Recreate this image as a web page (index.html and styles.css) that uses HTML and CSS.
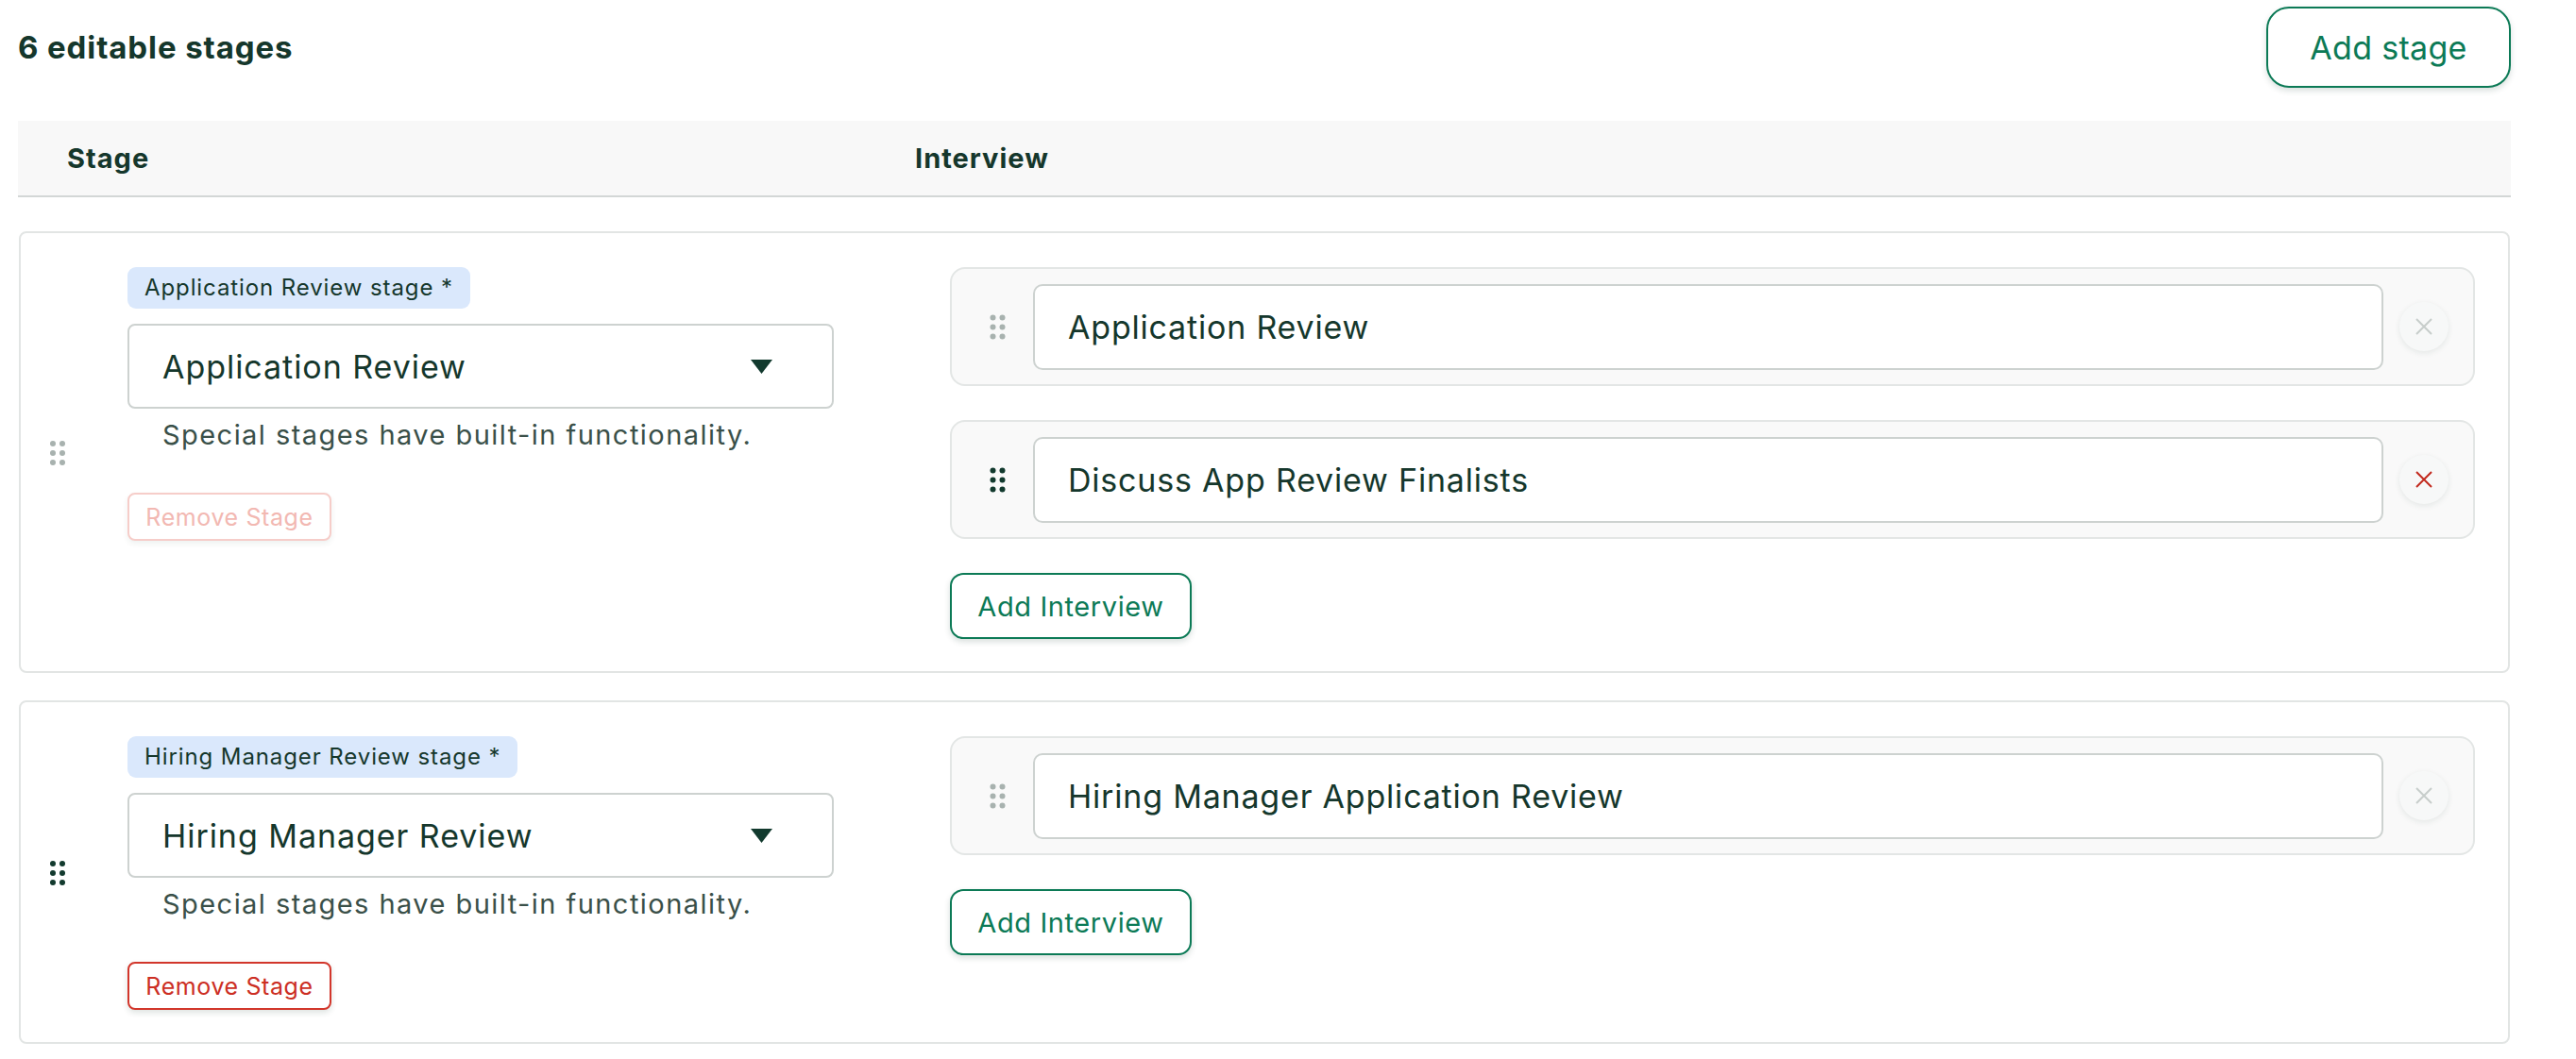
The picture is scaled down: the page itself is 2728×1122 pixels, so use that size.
FILE: index.html
```html
<!DOCTYPE html>
<html lang="en">
<head>
<meta charset="utf-8">
<title>Stages</title>
<link rel="stylesheet" href="styles.css">
</head>
<body>
<div class="page">
  <div class="topbar">
    <h2 class="title">6 editable stages</h2>
    <button class="btn-green btn-lg">Add stage</button>
  </div>

  <div class="table-head">
    <div class="th th-stage">Stage</div>
    <div class="th th-interview">Interview</div>
  </div>

  <div class="stage-list">
    <div class="stage-card">
      <div class="stage-handle">
        <svg class="dots dots-light" width="16" height="26" viewBox="0 0 16 26"><circle cx="3" cy="3" r="3"/><circle cx="13" cy="3" r="3"/><circle cx="3" cy="13" r="3"/><circle cx="13" cy="13" r="3"/><circle cx="3" cy="23" r="3"/><circle cx="13" cy="23" r="3"/></svg>
      </div>
      <div class="stage-col">
        <span class="badge">Application Review stage *</span>
        <div class="select">
          <span class="select-value">Application Review</span>
          <svg class="caret" width="23" height="15" viewBox="0 0 23 15"><polygon points="0,0 23,0 11.5,15"/></svg>
        </div>
        <p class="helper">Special stages have built-in functionality.</p>
        <button class="btn-remove is-disabled">Remove Stage</button>
      </div>
      <div class="interview-col">
        <div class="interview-row">
          <svg class="dots dots-light" width="17" height="27" viewBox="0 0 17 27"><circle cx="3.5" cy="3.5" r="3"/><circle cx="13.5" cy="3.5" r="3"/><circle cx="3.5" cy="13.5" r="3"/><circle cx="13.5" cy="13.5" r="3"/><circle cx="3.5" cy="23.5" r="3"/><circle cx="13.5" cy="23.5" r="3"/></svg>
          <div class="interview-input">Application Review</div>
          <span class="x-btn x-light"><svg width="18" height="18" viewBox="0 0 18 18"><path d="M1 1L17 17M17 1L1 17"/></svg></span>
        </div>
        <div class="interview-row">
          <svg class="dots dots-dark" width="17" height="27" viewBox="0 0 17 27"><circle cx="3.5" cy="3.5" r="3"/><circle cx="13.5" cy="3.5" r="3"/><circle cx="3.5" cy="13.5" r="3"/><circle cx="13.5" cy="13.5" r="3"/><circle cx="3.5" cy="23.5" r="3"/><circle cx="13.5" cy="23.5" r="3"/></svg>
          <div class="interview-input">Discuss App Review Finalists</div>
          <span class="x-btn x-red"><svg width="18" height="18" viewBox="0 0 18 18"><path d="M1 1L17 17M17 1L1 17"/></svg></span>
        </div>
        <button class="btn-green btn-sm">Add Interview</button>
      </div>
    </div>

    <div class="stage-card">
      <div class="stage-handle">
        <svg class="dots dots-dark" width="16" height="26" viewBox="0 0 16 26"><circle cx="3" cy="3" r="3"/><circle cx="13" cy="3" r="3"/><circle cx="3" cy="13" r="3"/><circle cx="13" cy="13" r="3"/><circle cx="3" cy="23" r="3"/><circle cx="13" cy="23" r="3"/></svg>
      </div>
      <div class="stage-col">
        <span class="badge">Hiring Manager Review stage *</span>
        <div class="select">
          <span class="select-value">Hiring Manager Review</span>
          <svg class="caret" width="23" height="15" viewBox="0 0 23 15"><polygon points="0,0 23,0 11.5,15"/></svg>
        </div>
        <p class="helper">Special stages have built-in functionality.</p>
        <button class="btn-remove">Remove Stage</button>
      </div>
      <div class="interview-col">
        <div class="interview-row">
          <svg class="dots dots-light" width="17" height="27" viewBox="0 0 17 27"><circle cx="3.5" cy="3.5" r="3"/><circle cx="13.5" cy="3.5" r="3"/><circle cx="3.5" cy="13.5" r="3"/><circle cx="13.5" cy="13.5" r="3"/><circle cx="3.5" cy="23.5" r="3"/><circle cx="13.5" cy="23.5" r="3"/></svg>
          <div class="interview-input">Hiring Manager Application Review</div>
          <span class="x-btn x-light"><svg width="18" height="18" viewBox="0 0 18 18"><path d="M1 1L17 17M17 1L1 17"/></svg></span>
        </div>
        <button class="btn-green btn-sm">Add Interview</button>
      </div>
    </div>
  </div>
</div>
</body>
</html>
```

FILE: styles.css
```css
* { box-sizing: border-box; }

html, body {
  margin: 0;
  padding: 0;
  background: #ffffff;
}

body {
  font-family: "Inter", "Liberation Sans", sans-serif;
  color: #15372c;
}

.page {
  width: 2640px;
  margin-left: 19px;
}

.topbar {
  display: flex;
  justify-content: space-between;
  align-items: center;
  height: 86px;
  margin-top: 7px;
}

.title {
  margin: 0;
  font-size: 33px;
  font-weight: 700;
  letter-spacing: 0.9px;
  color: #15372c;
}

button {
  font-family: inherit;
  cursor: pointer;
  background: #ffffff;
}

.btn-green {
  border: 2px solid #0c7a56;
  color: #0c7a56;
  box-shadow: 0 3px 6px rgba(21, 55, 44, 0.16);
}

.btn-lg {
  width: 259px;
  height: 86px;
  border-radius: 24px;
  font-size: 34px;
  font-weight: 400;
  letter-spacing: 0.3px;
}

.btn-sm {
  align-self: flex-start;
  height: 70px;
  width: 256px;
  padding: 0;
  border-radius: 14px;
  font-size: 29px;
  letter-spacing: 0.6px;
}

.table-head {
  display: flex;
  align-items: center;
  height: 81px;
  margin-top: 35px;
  background: #f8f8f8;
  border-bottom: 2px solid #d3d7d6;
  padding-left: 52px;
}

.th {
  font-size: 29px;
  font-weight: 700;
  letter-spacing: 1px;
  color: #15372c;
}

.th-stage { width: 898px; }

.stage-list {
  display: flex;
  flex-direction: column;
  gap: 29px;
  margin: 36px 1px 0;
}

.stage-card {
  display: flex;
  align-items: flex-start;
  border: 2px solid #e2e5e4;
  border-radius: 8px;
  padding: 36px 35px 34px 31px;
}

.stage-handle {
  align-self: center;
  width: 16px;
  display: flex;
}

.dots-light { fill: #a8b2af; }
.dots-dark { fill: #123a2e; }

.stage-col {
  width: 748px;
  margin-left: 66px;
  display: flex;
  flex-direction: column;
  align-items: flex-start;
}

.badge {
  height: 44px;
  line-height: 44px;
  padding: 0 18px;
  background: #dae8fc;
  border-radius: 9px;
  font-size: 24px;
  letter-spacing: 0.9px;
  color: #15372c;
  white-space: nowrap;
}

.select {
  width: 748px;
  height: 90px;
  margin-top: 16px;
  border: 2px solid #cdd2d0;
  border-radius: 8px;
  display: flex;
  align-items: center;
  justify-content: space-between;
  padding: 0 63px 0 35px;
  font-size: 34px;
  letter-spacing: 0.95px;
}

.caret { fill: #123a2e; }

.helper {
  margin: 10px 0 0;
  padding-left: 37px;
  font-size: 29px;
  line-height: 36px;
  letter-spacing: 1.45px;
  color: #3a5049;
}

.btn-remove {
  margin-top: 43px;
  height: 51px;
  width: 216px;
  padding: 0;
  border: 2px solid #d2362b;
  color: #cc2e23;
  border-radius: 8px;
  font-size: 25px;
  letter-spacing: 0.6px;
  box-shadow: 0 3px 6px rgba(21, 55, 44, 0.14);
}

.btn-remove.is-disabled {
  border-color: #f6cdc9;
  color: #f2b8b2;
  box-shadow: 0 3px 6px rgba(21, 55, 44, 0.07);
}

.interview-col {
  flex: 1;
  margin-left: 123px;
  display: flex;
  flex-direction: column;
  gap: 36px;
}

.interview-row {
  display: flex;
  align-items: center;
  height: 126px;
  background: #f9f9f9;
  border: 2px solid #e3e6e5;
  border-radius: 16px;
  padding: 0 26px 0 40px;
}

.interview-input {
  flex: 1;
  height: 91px;
  margin-left: 29px;
  background: #ffffff;
  border: 2px solid #cdd2d0;
  border-radius: 10px;
  display: flex;
  align-items: center;
  padding-left: 35px;
  font-size: 34px;
  letter-spacing: 0.8px;
  color: #15372c;
}

.x-btn {
  width: 52px;
  height: 52px;
  margin-left: 17px;
  border-radius: 50%;
  background: #f7f8f8;
  box-shadow: 0 2px 6px rgba(21, 55, 44, 0.09);
  display: flex;
  align-items: center;
  justify-content: center;
}

.x-btn svg path {
  fill: none;
  stroke-width: 2;
}

.x-light svg path { stroke: #c7cdcb; }
.x-red svg path { stroke: #c2281c; }
```
